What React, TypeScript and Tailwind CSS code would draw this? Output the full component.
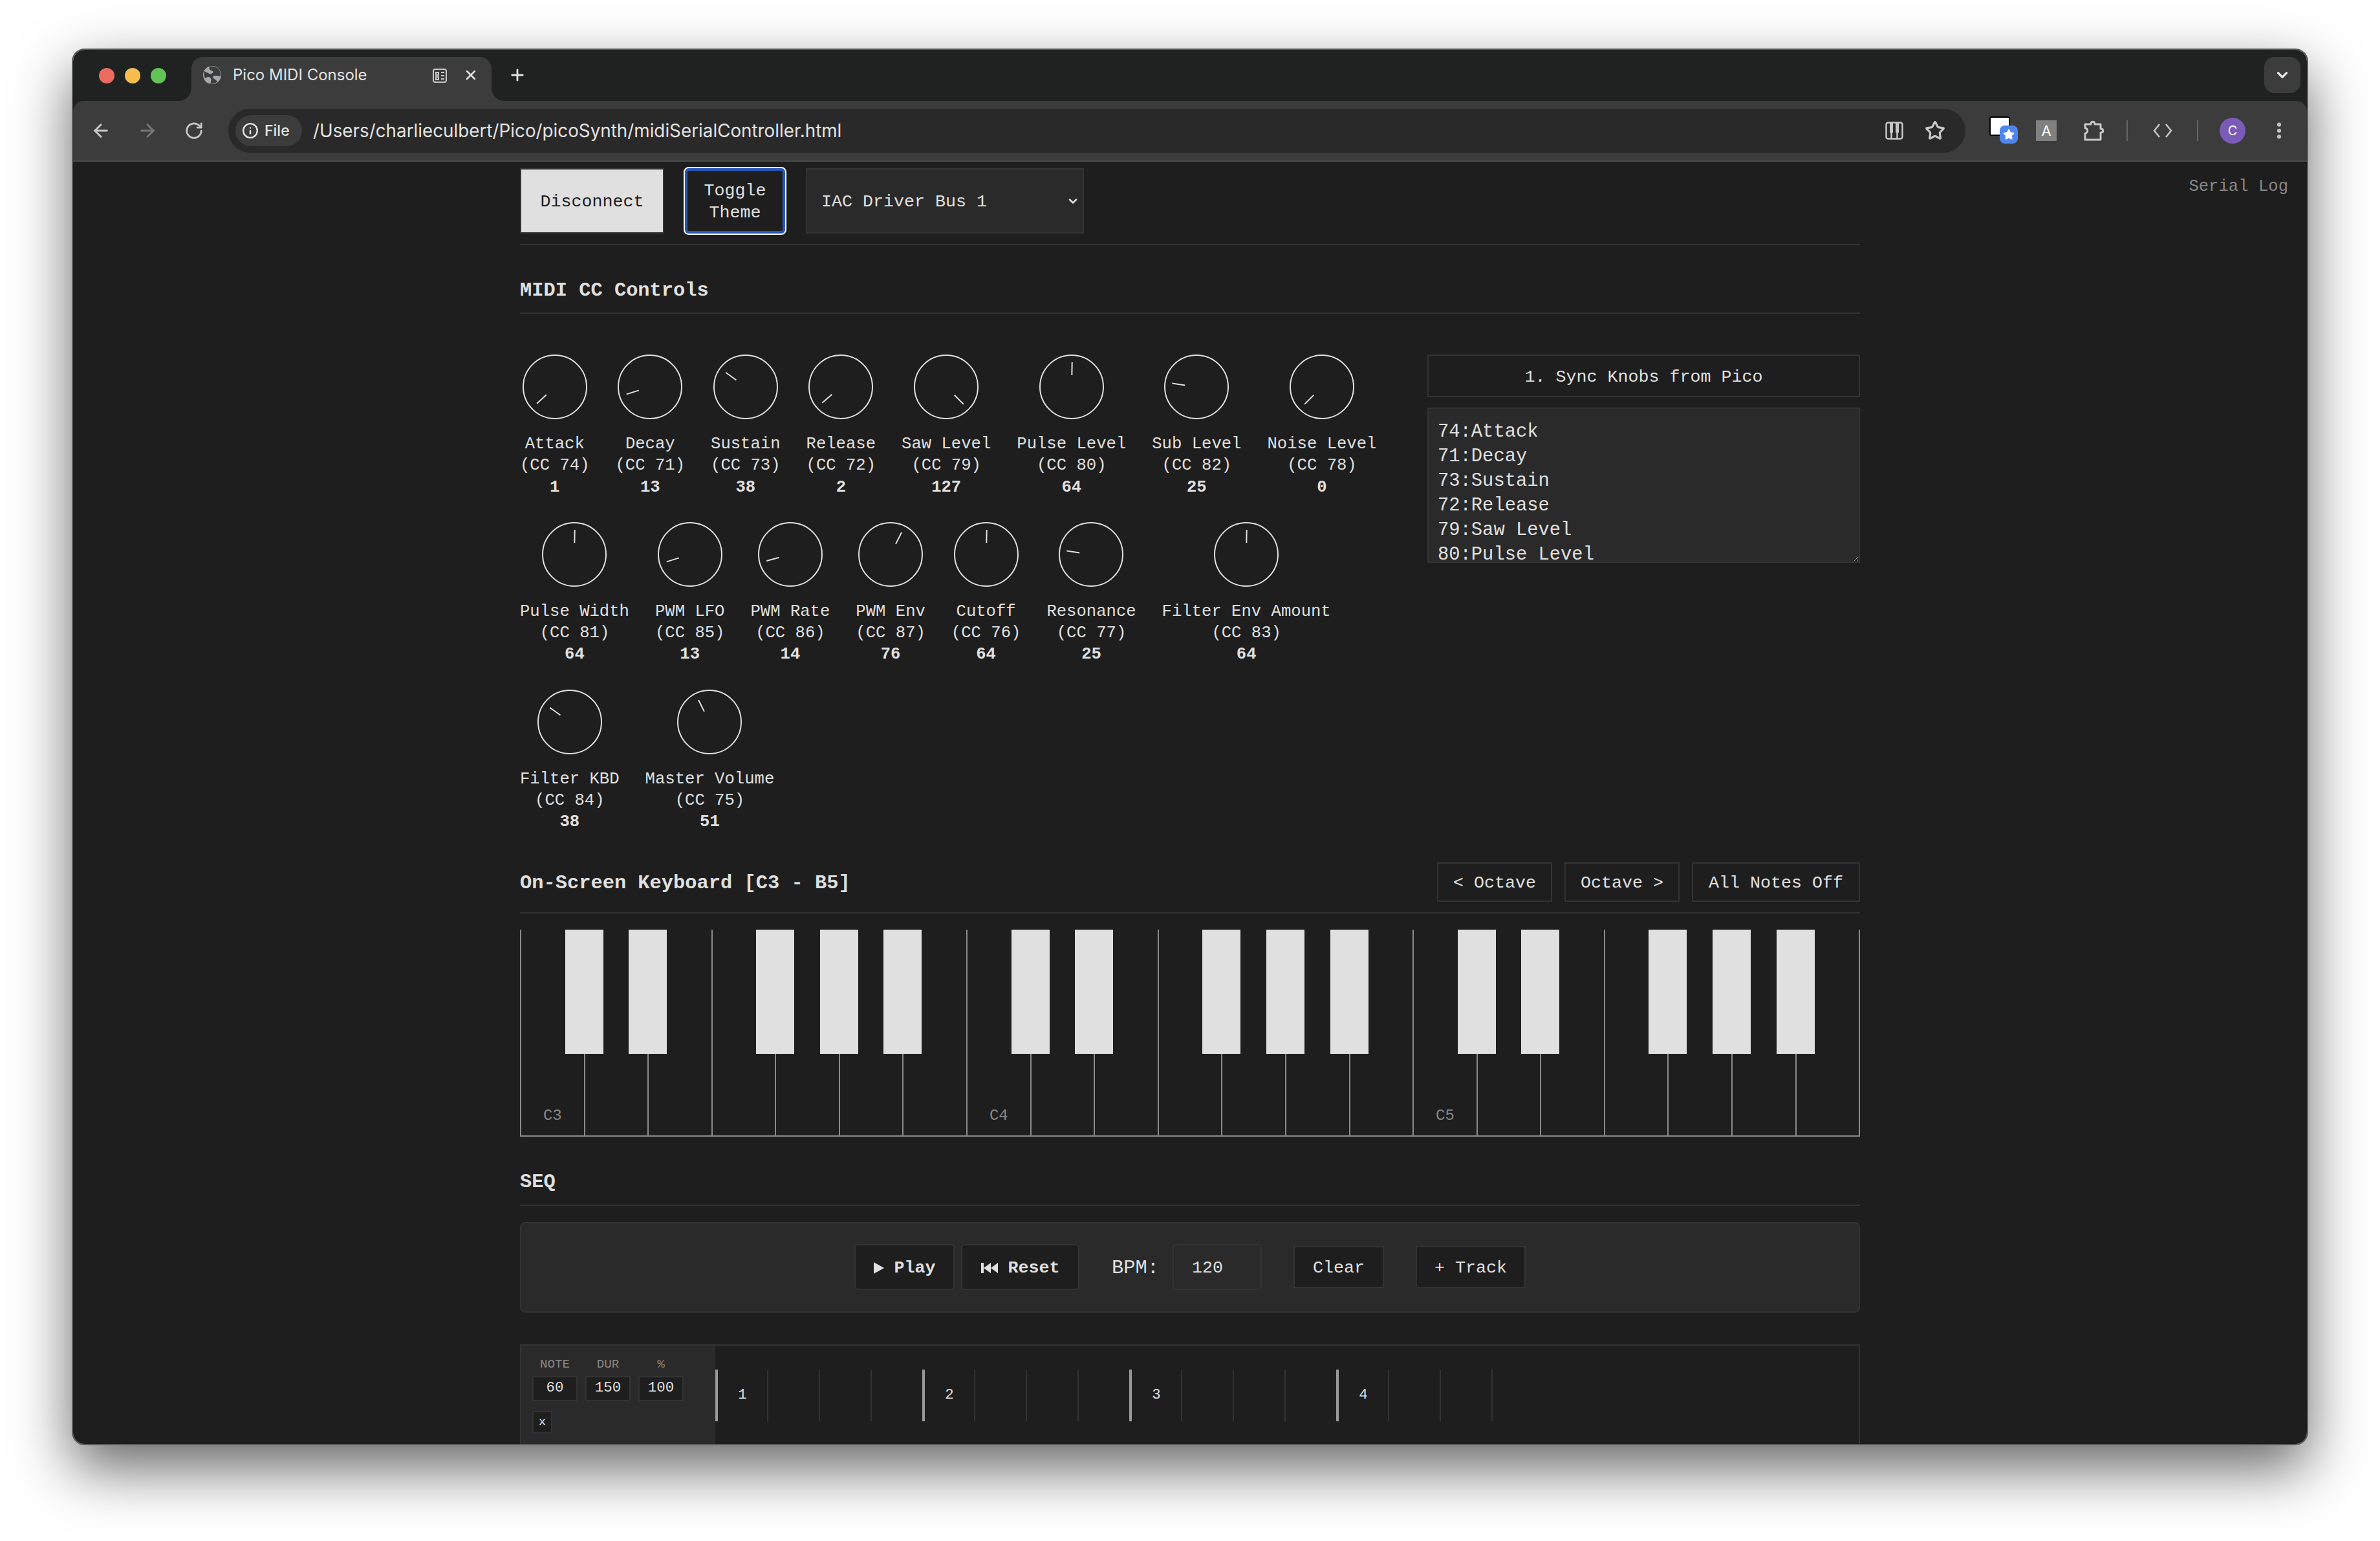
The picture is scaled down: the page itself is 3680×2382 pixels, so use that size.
import React from "react";
import { ArrowLeft, ArrowRight, RotateCw, Info, Star, ChevronDown, EllipsisVertical, X, Plus } from "lucide-react";

const row = [
  ["Attack", 74, 1], ["Decay", 71, 13], ["Sustain", 73, 38], ["Release", 72, 2], ["Saw Level", 79, 127], ["Pulse Level", 80, 64], ["Sub Level", 82, 25], ["Noise Level", 78, 0],
  ["Pulse Width", 81, 64], ["PWM LFO", 85, 13], ["PWM Rate", 86, 14], ["PWM Env", 87, 76], ["Cutoff", 76, 64], ["Resonance", 77, 25], ["Filter Env Amount", 83, 64],
  ["Filter KBD", 84, 38], ["Master Volume", 75, 51],
] as [string, number, number][];

const syncText = row.slice(0, 12).map((k) => `${k[1]}:${k[0]}`).join("\n");

function Knob({ name, cc, value }: { name: string; cc: number; value: number }) {
  const angle = (value / 127) * 270 - 135;
  return (
    <div className="flex flex-col items-center text-center">
      <div className="relative w-[100px] h-[100px] rounded-full border-2 border-[#e0e0e0] box-border">
        <div
          className="absolute left-[47px] top-[10px] w-[2px] h-[20px] bg-[#e0e0e0] origin-[1px_38px]"
          style={{ transform: `rotate(${angle}deg)` }}
        />
      </div>
      <div className="mt-[22px] text-[25.6px] leading-[33.3px] whitespace-nowrap text-[#e0e0e0]">
        <div>{name}</div>
        <div>(CC {cc})</div>
        <div className="font-bold">{value}</div>
      </div>
    </div>
  );
}

function Keyboard() {
  return (
    <div className="mt-[25px] h-[320px] flex border-l-2 border-b-2 border-[#8a8a8a] box-border">
      {Array.from({ length: 21 }).map((_, i) => {
        const m = i % 7;
        const hasBlack = m !== 2 && m !== 6;
        return (
          <div key={i} className="relative flex-1 h-full border-r-2 border-[#8a8a8a] box-border">
            {hasBlack && <div className="absolute z-10 top-0 right-[-30px] w-[59px] h-[192px] bg-[#e0e0e0]" />}
            {m === 0 && (
              <div className="absolute left-0 right-0 bottom-[15px] text-center text-[24px] leading-[30px] text-[#888]">
                C{3 + i / 7}
              </div>
            )}
          </div>
        );
      })}
    </div>
  );
}

function TabFlare({ side }: { side: "l" | "r" }) {
  return (
    <svg className={`absolute bottom-0 ${side === "l" ? "left-[-20px]" : "right-[-20px]"} w-[20px] h-[20px]`} viewBox="0 0 20 20">
      <path d={side === "l" ? "M20 0 V20 H0 A20 20 0 0 0 20 0Z" : "M0 0 V20 H20 A20 20 0 0 1 0 0Z"} fill="#3c3c3c" />
    </svg>
  );
}

function Chrome() {
  return (
    <div className="font-['Inter',sans-serif] text-[#e3e3e3] shrink-0 bg-[#202222]">
      <div className="h-[79px] flex items-start pl-[40px] pr-[10px]">
        <div className="flex gap-[16px] mt-[28px]">
          <div className="w-[24px] h-[24px] rounded-full bg-[#ee6a5f]" />
          <div className="w-[24px] h-[24px] rounded-full bg-[#f5bd4f]" />
          <div className="w-[24px] h-[24px] rounded-full bg-[#61c454]" />
        </div>
        <div className="relative ml-[39px] mt-[11px] w-[464px] h-[68px] bg-[#3c3c3c] rounded-t-[18px] flex items-start pt-[14px] pl-[18px]">
          <TabFlare side="l" />
          <TabFlare side="r" />
          <svg className="w-[28px] h-[28px]" viewBox="0 0 28 28">
            <circle cx="14" cy="14" r="14" fill="#a6aaae" />
            <path d="M10 1 C8 5 12 7 15 8 C17 10 13 13 10 12 C7 11 4 9 2 8 C1 12 1 15 3 19 C6 17 9 16 11 18 C13 20 13 24 11 27 C15 28 19 27 22 24 C20 21 16 20 15 17 C17 14 22 15 27 16 C28 11 26 6 22 3 C18 1 14 0 10 1Z" fill="#3c3c3c" />
          </svg>
          <span className="ml-[18px] text-[24px] leading-[28px] whitespace-nowrap">Pico MIDI Console</span>
          <svg className="absolute left-[372px] top-[17px] w-[24px] h-[24px]" viewBox="0 0 24 24" fill="none" stroke="#c7c7c7" strokeWidth="2">
            <rect x="2" y="2" width="20" height="20" rx="3" />
            <path d="M6 7h4v4H6zM6 14h4v4H6zM14 7h5M14 12h5M14 17h5" />
          </svg>
          <X size={24} strokeWidth={2.5} className="absolute left-[420px] top-[16px] text-[#e3e3e3]" />
        </div>
        <Plus size={28} strokeWidth={2.4} className="ml-[26px] mt-[25px] text-[#e3e3e3]" />
        <div className="ml-auto mt-[11px] w-[56px] h-[56px] rounded-[16px] bg-[#3c3c3c] flex items-center justify-center">
          <ChevronDown size={26} strokeWidth={3} className="text-[#e3e3e3]" />
        </div>
      </div>
      <div className="h-[94px] box-border bg-[#3c3c3c] border-b-2 border-[#4a4a4a] rounded-t-[16px] flex items-center pl-[23px]">
        <div className="w-[40px] flex justify-center"><ArrowLeft size={32} strokeWidth={2.2} className="text-[#c7c7c7]" /></div>
        <div className="ml-[32px] w-[40px] flex justify-center"><ArrowRight size={32} strokeWidth={2.2} className="text-[#777]" /></div>
        <div className="ml-[32px] w-[40px] flex justify-center"><RotateCw size={30} strokeWidth={2.2} className="text-[#c7c7c7]" /></div>
        <div className="ml-[33px] w-[2686px] h-[68px] rounded-full bg-[#292929] flex items-center pl-[11px] pr-[31px]">
          <div className="w-[103px] h-[48px] rounded-full bg-[#3c3c3c] flex items-center pl-[10px] gap-[9px]">
            <Info size={26} strokeWidth={2.2} className="text-[#e3e3e3]" />
            <span className="text-[23px] leading-[28px] font-medium">File</span>
          </div>
          <span className="ml-[17px] text-[27.8px] leading-[34px] whitespace-nowrap">/Users/charlieculbert/Pico/picoSynth/midiSerialController.html</span>
          <svg className="ml-auto w-[28px] h-[28px]" viewBox="0 0 28 28" fill="none" stroke="#c7c7c7" strokeWidth="2.5">
            <rect x="1.500" y="1.500" width="25" height="25" rx="3" />
            <path d="M9.500 16v11M18.500 16v11" />
            <path d="M7 2h5v15H7zM16 2h5v15h-5z" fill="#c7c7c7" stroke="none" />
          </svg>
          <Star size={32} strokeWidth={2.4} className="ml-[33px] text-[#c7c7c7]" />
        </div>
        <div className="relative ml-[37px] w-[44px] h-[44px]">
          <div className="absolute left-0 top-0 w-[32px] h-[30px] bg-white border-2 border-black rounded-[3px]" />
          <div className="absolute left-[16px] top-[14px] w-[28px] h-[28px] rounded-[8px] bg-[#4f86ec] flex items-center justify-center">
            <Star size={18} fill="#fff" className="text-white" />
          </div>
        </div>
        <div className="ml-[28px] w-[32px] h-[32px] bg-[#808080] flex items-center justify-center text-white text-[22px] leading-none">A</div>
        <svg className="ml-[42px] w-[32px] h-[32px]" viewBox="0 0 32 32" fill="none" stroke="#c7c7c7" strokeWidth="3" strokeLinejoin="round">
          <path d="M2 6 H11 C11 1 17 1 17 6 H26 V13 C31 13 31 19 26 19 V30 H2 V20 C7 20 7 12 2 12 Z" />
        </svg>
        <div className="ml-[34px] w-[2px] h-[32px] bg-[#666]" />
        <svg className="ml-[38px] w-[32px] h-[24px]" viewBox="0 0 32 24" fill="none" stroke="#c7c7c7" strokeWidth="2.5">
          <path d="M11 2 L3 12 L11 22 M21 2 L29 12 L21 22" />
        </svg>
        <div className="ml-[37px] w-[2px] h-[32px] bg-[#666]" />
        <div className="ml-[33px] w-[40px] h-[40px] rounded-full bg-[#7a5bb8] flex items-center justify-center text-white text-[20px]">C</div>
        <EllipsisVertical size={32} strokeWidth={2.6} className="ml-[36px] text-[#c7c7c7]" />
      </div>
    </div>
  );
}

export default function App() {
  const btn = "box-border border-2 border-[#333] bg-[#1e1e1e] text-[#e0e0e0] text-[26.67px] flex items-center justify-center whitespace-nowrap pt-[3px]";
  return (
    <div className="relative w-[3680px] h-[2382px] bg-white overflow-hidden pl-[111px] pt-[75px]">
      <div className="w-[3458px] h-[2159px] box-border border-2 border-[#5a5a5a] rounded-[20px] overflow-hidden flex flex-col shadow-[0_36px_90px_rgba(0,0,0,0.6)]">
        <Chrome />
        <div className="relative flex-1 bg-[#1e1e1e] overflow-hidden font-['Liberation_Mono',monospace] text-[#e0e0e0]">
          <div className="absolute top-[22px] right-[29px] text-[25.6px] leading-[33px] text-[#888]">Serial Log</div>
          <div className="ml-[691px] w-[2072px]">
            <div className="mt-[10px] pb-[16px] border-b-2 border-[#333] flex items-center gap-[30px]">
              <div className="flex items-center gap-[30px] h-[101px]">
                <div className="w-[223px] h-[101px] box-border border-2 border-[#333] bg-[#e0e0e0] text-[#1e1e1e] text-[26.67px] flex items-center justify-center pt-[3px]">Disconnect</div>
                <div className="w-[159px] h-[105px] box-border border-2 border-white rounded-[8px] shadow-[inset_0_0_0_4px_#2458bc] bg-[#1e1e1e] text-[26.67px] leading-[34px] text-center flex items-center justify-center pt-[3px]">Toggle<br />Theme</div>
                <div className="relative w-[430px] h-[101px] box-border border-2 border-[#333] bg-[#2a2a2a] text-[26.67px] flex items-center pl-[22px] pt-[3px]">
                  IAC Driver Bus 1
                  <ChevronDown size={20} strokeWidth={3} className="absolute right-[5px] top-[39px] text-[#e0e0e0]" />
                </div>
              </div>
            </div>
            <div className="pt-[50px] pb-[14px] border-b-2 border-[#333] text-[30.4px] leading-[40px] font-bold">MIDI CC Controls</div>
            <div className="mt-[63px] flex items-start justify-between">
              <div className="w-[1330px] flex flex-wrap gap-x-[40px] gap-y-[37px]">
                {row.map((k) => <Knob key={k[0]} name={k[0]} cc={k[1]} value={k[2]} />)}
              </div>
              <div className="w-[669px]">
                <div className="w-full h-[66px] box-border border-2 border-[#333] bg-[#1e1e1e] text-[26.67px] flex items-center justify-center pt-[3px]">1. Sync Knobs from Pico</div>
                <textarea
                  readOnly
                  value={syncText}
                  className="mt-[16px] block w-full h-[240px] box-border border-2 border-[#333] bg-[#2a2a2a] text-[#e0e0e0] text-[28.8px] leading-[38px] px-[14px] pt-[17px] pb-[13px] outline-none resize-y [scrollbar-width:none] [color-scheme:dark] font-['Liberation_Mono',monospace]"
                />
              </div>
            </div>
            <div className="mt-[45px] pb-[16px] border-b-2 border-[#333] flex items-center justify-between">
              <div className="text-[30.4px] leading-[40px] font-bold pt-[4px]">On-Screen Keyboard [C3 - B5]</div>
              <div className="flex gap-[19px]">
                <div className={`${btn} w-[178px] h-[61px]`}>&lt; Octave</div>
                <div className={`${btn} w-[178px] h-[61px]`}>Octave &gt;</div>
                <div className={`${btn} w-[260px] h-[61px]`}>All Notes Off</div>
              </div>
            </div>
            <Keyboard />
            <div className="mt-[50px] pb-[15px] border-b-2 border-[#333] text-[30.4px] leading-[40px] font-bold">SEQ</div>
            <div className="mt-[25px] h-[140px] box-border border-2 border-[#333] rounded-[8px] bg-[#2a2a2a] flex items-center justify-center">
              <div className={`${btn} w-[155px] h-[71px] rounded-[6px] font-bold gap-[16px]`}>
                <svg className="w-[16px] h-[18px]" viewBox="0 0 16 18"><path d="M0 0 L16 9 L0 18Z" fill="#e0e0e0" /></svg>
                Play
              </div>
              <div className={`${btn} ml-[10px] w-[183px] h-[71px] rounded-[6px] font-bold gap-[16px]`}>
                <svg className="w-[26px] h-[16px]" viewBox="0 0 26 16"><path d="M0 0h4v16H0zM4 8 L15 0V16ZM15 8 L26 0V16Z" fill="#e0e0e0" /></svg>
                Reset
              </div>
              <div className="ml-[50px] text-[30.4px] leading-[40px] pt-[3px]">BPM:</div>
              <div className="ml-[21px] w-[138px] h-[71px] box-border border-2 border-[#333] rounded-[6px] bg-[#2a2a2a] text-[26.67px] flex items-center pl-[28px] pt-[3px]">120</div>
              <div className={`${btn} ml-[49px] w-[140px] h-[65px]`}>Clear</div>
              <div className={`${btn} ml-[49px] w-[170px] h-[65px]`}>+ Track</div>
            </div>
            <div className="mt-[49px] h-[200px] box-border border-2 border-[#333] flex">
              <div className="w-[300px] h-full bg-[#2a2a2a] pl-[17px] pt-[17px] shrink-0">
                <div className="flex gap-[12px]">
                  {[["NOTE", "60"], ["DUR", "150"], ["%", "100"]].map(([l, v]) => (
                    <div key={l} className="w-[70px] flex flex-col items-center">
                      <div className="text-[19.2px] leading-[24px] text-[#888]">{l}</div>
                      <div className="mt-[6px] w-[70px] h-[39px] box-border border-2 border-[#333] bg-[#1e1e1e] text-[22.4px] flex items-center justify-center">{v}</div>
                    </div>
                  ))}
                </div>
                <div className="mt-[15px] w-[31px] h-[35px] box-border border-2 border-[#333] bg-[#1e1e1e] text-[19.2px] flex items-center justify-center">x</div>
              </div>
              <div className="flex mt-[37px] h-[80px]">
                {Array.from({ length: 16 }).map((_, i) => (
                  <div
                    key={i}
                    className={`w-[80px] h-[80px] box-border flex items-center justify-center text-[22.4px] ${i % 4 === 0 ? "border-l-[4px] border-[#999]" : "border-l-2 border-[#333]"}`}
                  >
                    {i % 4 === 0 ? i / 4 + 1 : ""}
                  </div>
                ))}
              </div>
            </div>
          </div>
        </div>
      </div>
    </div>
  );
}
